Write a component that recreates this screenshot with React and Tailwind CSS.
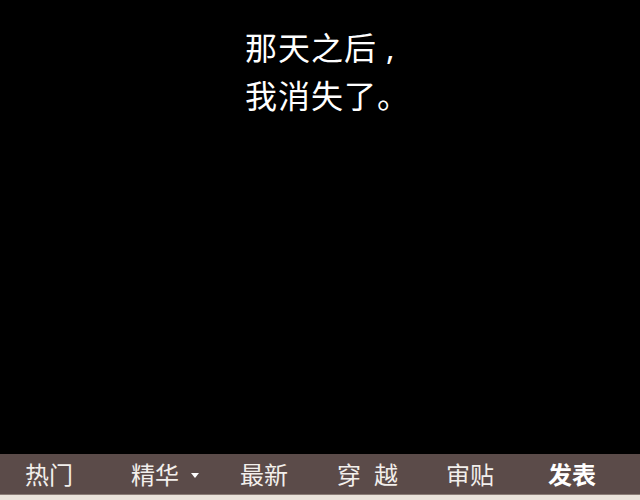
import React from "react";

const font = { fontFamily: '"Noto Sans CJK SC", "Noto Sans", sans-serif' };

export default function App() {
  return (
    <div className="w-[640px] h-[500px] flex flex-col bg-black" style={font}>
      {/* story panel */}
      <div className="h-[454px] pt-[23px] pl-[245px]">
        <div className="text-white text-[32px] leading-[46px] tracking-[1px]">
          <p>
            那天之后<span className="ml-[9px]" style={{ fontFamily: '"Noto Sans", sans-serif' }}>,</span>
          </p>
          <p>我消失了。</p>
        </div>
      </div>

      {/* bottom nav */}
      <div className="h-[40px] bg-[#5b4b49] flex items-center pl-[25px] text-[#f2efec] text-[24px] leading-none">
        <span className="w-[106px]">热门</span>
        <span className="w-[109px] flex items-center">
          精华
          <span className="ml-[12px] mt-[3px] w-0 h-0 border-l-[4px] border-r-[4px] border-t-[5px] border-l-transparent border-r-transparent border-t-white" />
        </span>
        <span className="w-[97px]">最新</span>
        <span className="w-[109px] flex gap-[13px]">
          <span>穿</span>
          <span>越</span>
        </span>
        <span className="w-[102px]">审贴</span>
        <span className="font-bold text-white">发表</span>
      </div>
      <div className="h-[6px] bg-[#e9e2da] border-t border-[#8a7c76]" />
    </div>
  );
}
